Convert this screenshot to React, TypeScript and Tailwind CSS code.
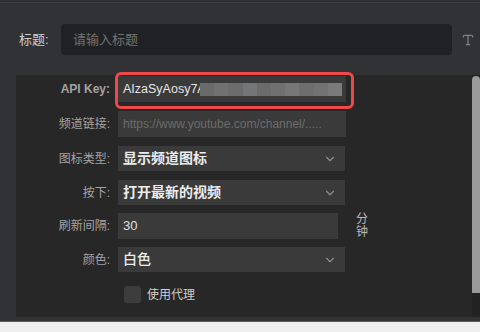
import { ChevronDown, Type } from "lucide-react";

const font = { fontFamily: '"Liberation Sans", "Noto Sans CJK SC", sans-serif' };

const Label = ({ children, bold }: { children: string; bold?: boolean }) => (
    <div className={`w-[102px] shrink-0 pr-[8px] text-right text-[12px] text-[#a3a3a3] ${bold ? "font-bold" : ""}`}>
        {children}
    </div>
);

const Select = ({ value, bold = true }: { value: string; bold?: boolean }) => (
    <div className="w-[227px] h-[25px] bg-[#3a3a3a] flex items-center justify-between pl-[5px] pr-[8px]">
        <span className={`text-[14px] text-[#ececec] ${bold ? "font-bold" : "font-medium"}`}>{value}</span>
        <ChevronDown size={14} strokeWidth={2} className="text-[#8e8e8e]" />
    </div>
);

const blur = ["#6a6a6a", "#717171", "#6c6c6c", "#747577", "#6b6b6b", "#707070", "#777777", "#6e6e6e", "#727272", "#7a7a7a"];

export default function App() {
    return (
        <div style={font} className="w-[480px] h-[332px] bg-[#313236] flex flex-col overflow-hidden">
            <div className="h-[3px] bg-[#2e2f32] border-b border-[#3c3d41]" />

            {/* title row */}
            <div className="flex items-center h-[31px] mt-[21px] pl-[19px]">
                <div className="w-[42px] text-[13px] text-[#d0d0d0]">标题:</div>
                <div className="w-[391px] h-[31px] rounded-[4px] bg-[#202124] flex items-center pl-[12px] text-[13px] text-[#727272]">
                    请输入标题
                </div>
                <Type size={14} strokeWidth={1.6} className="ml-[9px] text-[#9a9a9a]" />
            </div>

            {/* settings panel */}
            <div className="flex mt-[20px] ml-[16px] h-[242px]">
                <div className="w-[456px] bg-[#272727] pt-[1px] flex flex-col">
                    <div className="flex items-center h-[26px]">
                        <Label bold>API Key:</Label>
                        <div className="relative w-[228px] h-[26px] bg-[#3a3a3a] flex items-center pl-[5px]">
                            <span className="text-[12.5px] text-[#e6e6e6]">AIzaSyAosy7A</span>
                            {/* blurred part of the key */}
                            <div className="absolute left-[82px] top-[7px] flex h-[13px]">
                                {blur.map((c, i) => (
                                    <div key={i} className="w-[14.2px] h-full" style={{ backgroundColor: c }} />
                                ))}
                            </div>
                            <div className="absolute left-[-3px] top-[-4px] w-[239px] h-[37px] border-[3px] border-[#ee4848] rounded-[6px]" />
                        </div>
                    </div>

                    <div className="flex items-center h-[26px] mt-[9px]">
                        <Label>频道链接:</Label>
                        <div className="w-[228px] h-[26px] bg-[#3a3a3a] flex items-center pl-[5px] text-[12px] text-[#6c6c6c]">
                            https://www.youtube.com/channel/.....
                        </div>
                    </div>

                    <div className="flex items-center h-[25px] mt-[9px]">
                        <Label>图标类型:</Label>
                        <Select value="显示频道图标" />
                    </div>

                    <div className="flex items-center h-[25px] mt-[9px]">
                        <Label>按下:</Label>
                        <Select value="打开最新的视频" />
                    </div>

                    <div className="flex items-center h-[26px] mt-[8px]">
                        <Label>刷新间隔:</Label>
                        <div className="w-[220px] h-[26px] bg-[#3a3a3a] flex items-center pl-[5px] text-[13px] text-[#e0e0e0]">
                            30
                        </div>
                        <div className="ml-[18px] w-[12px] flex flex-col text-[12px] leading-[13px] text-[#b8b8b8]">
                            <span>分</span>
                            <span>钟</span>
                        </div>
                    </div>

                    <div className="flex items-center h-[25px] mt-[8px]">
                        <Label>颜色:</Label>
                        <Select value="白色" bold={false} />
                    </div>

                    <div className="flex items-center h-[17px] mt-[14px] pl-[108px]">
                        <div className="w-[17px] h-[17px] rounded-[3px] bg-[#3c3c3c]" />
                        <span className="ml-[6px] text-[12px] text-[#cfcfcf]">使用代理</span>
                    </div>
                </div>

                {/* scrollbar */}
                <div className="w-[8px] flex flex-col bg-[#222222]">
                    <div className="h-[217px] mt-[1px] rounded-t-full bg-[#9a9a9a]" />
                </div>
            </div>

            <div className="h-[4px]" />
            <div className="h-px bg-[#5a5a5c]" />
            <div className="flex-1 bg-[#efefef]" />
        </div>
    );
}
